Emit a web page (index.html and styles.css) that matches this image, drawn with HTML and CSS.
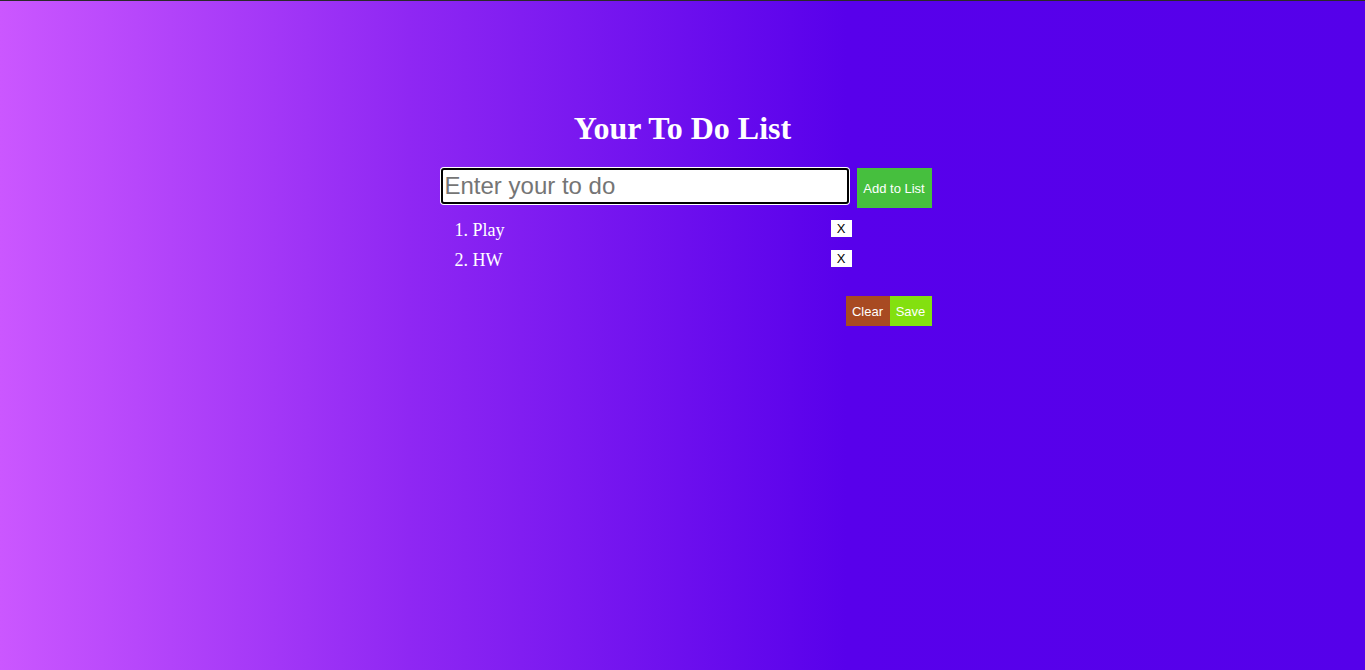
FILE: index.html
```html
<!DOCTYPE html>
<html lang="en">
<head>
<meta charset="utf-8">
<title>To Do List</title>
<link rel="stylesheet" href="styles.css">
</head>
<body>
<div class="page">
  <main class="app">
    <h1 class="title">Your To Do List</h1>
    <div class="entry">
      <input class="todo-input" type="text" placeholder="Enter your to do" autofocus>
      <button class="add-btn">Add to List</button>
    </div>
    <ol class="todo-list">
      <li class="todo-item"><div class="row"><span class="todo-text">Play</span><button class="del-btn">X</button></div></li>
      <li class="todo-item"><div class="row"><span class="todo-text">HW</span><button class="del-btn">X</button></div></li>
    </ol>
    <div class="actions">
      <button class="clear-btn">Clear</button>
      <button class="save-btn">Save</button>
    </div>
  </main>
</div>
</body>
</html>
```
FILE: styles.css
```css
html, body {
  margin: 0;
  padding: 0;
  height: 100%;
}
body {
  border-top: 1px solid #2a2a2a;
  box-sizing: border-box;
  background: linear-gradient(90deg, #cb57ff 0%, #8f27f3 30%, #5800eb 62%, #5500ea 100%);
  font-family: "Liberation Serif", "Times New Roman", serif;
  color: #fff;
}
.page {
  padding-top: 109px;
}
.app {
  width: 500px;
  margin: 0 auto;
}
.title {
  font-family: "Liberation Serif", serif;
  font-size: 32px;
  font-weight: bold;
  text-align: center;
  margin: 0 0 21px 0;
  line-height: 37px;
}
.entry {
  display: flex;
  align-items: flex-start;
  gap: 8px;
  padding-left: 8px;
}
.todo-input {
  box-sizing: border-box;
  width: 408px;
  height: 36px;
  border: 2px solid #000;
  border-radius: 3px;
  box-shadow: 0 0 0 1px #fff;
  outline: none;
  padding: 0 2px;
  font-family: "Liberation Sans", Arial, sans-serif;
  font-size: 24px;
  color: #000;
  background: #fff;
  caret-color: #000;
}
.todo-input:focus {
  outline: none;
}
.todo-input::placeholder {
  color: #757575;
}
.add-btn {
  box-sizing: border-box;
  width: 75px;
  height: 40px;
  border: none;
  padding: 0;
  background: #46bf3e;
  color: #fff;
  font-family: "Liberation Sans", Arial, sans-serif;
  font-size: 13px;
}
.todo-list {
  margin: 12px 0 26px 0;
  padding-left: 40px;
  font-size: 18px;
}
.todo-item {
  line-height: 20px;
  margin-bottom: 10px;
}
.row {
  display: flex;
  align-items: flex-start;
  justify-content: space-between;
  width: 379px;
}
.del-btn {
  box-sizing: border-box;
  width: 21px;
  height: 17px;
  border: none;
  padding: 0;
  background: #fff;
  color: #000;
  font-family: "Liberation Sans", Arial, sans-serif;
  font-size: 13px;
  line-height: 17px;
}
.actions {
  display: flex;
  justify-content: flex-end;
  padding-right: 1px;
}
.clear-btn, .save-btn {
  box-sizing: border-box;
  height: 30px;
  border: none;
  color: #fff;
  font-family: "Liberation Sans", Arial, sans-serif;
  font-size: 13px;
  padding: 0 6px;
}
.clear-btn {
  width: 44px;
  background: #a84a22;
}
.save-btn {
  width: 42px;
  background: #83e00f;
}
```
